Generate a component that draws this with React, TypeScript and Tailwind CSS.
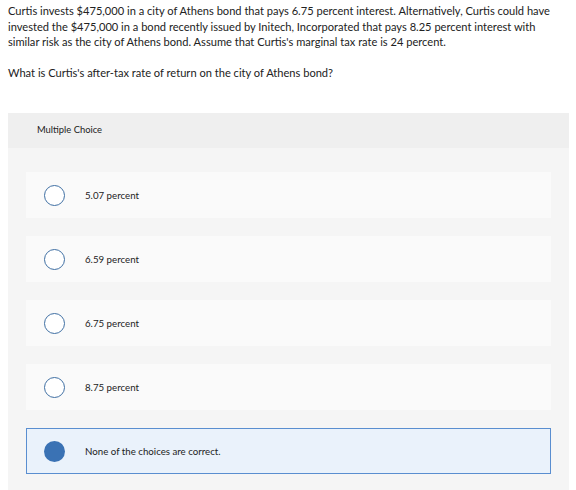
import React from "react";

const options = [
  { label: "5.07 percent", selected: false },
  { label: "6.59 percent", selected: false },
  { label: "6.75 percent", selected: false },
  { label: "8.75 percent", selected: false },
  { label: "None of the choices are correct.", selected: true },
];

export default function App() {
  return (
    <div className="w-[576px] h-[490px] bg-white overflow-hidden" style={{ fontFamily: "Lato, 'Open Sans', sans-serif" }}>
      <div className="pl-2 pt-[3px] text-[11.1px] leading-[15.5px] text-[#222] whitespace-nowrap">
        <p>
          Curtis invests $475,000 in a city of Athens bond that pays 6.75 percent interest. Alternatively, Curtis could have
          <br />
          invested the $475,000 in a bond recently issued by Initech, Incorporated that pays 8.25 percent interest with
          <br />
          similar risk as the city of Athens bond. Assume that Curtis's marginal tax rate is 24 percent.
        </p>
        <p className="mt-[15px]">What is Curtis's after-tax rate of return on the city of Athens bond?</p>
      </div>
      <div className="ml-2 mr-[7px] mt-[33px] bg-[#f5f5f5] h-[400px]">
        <div className="h-[35px] bg-[#efefef] flex items-center pl-[29px] text-[9.4px] text-[#222]">Multiple Choice</div>
        <div className="px-[18px] pt-[24px] flex flex-col gap-[18px]">
          {options.map((o) => (
            <div
              key={o.label}
              className={
                o.selected
                  ? "h-[46px] flex items-center bg-[#eaf2fb] border-[1.5px] border-[#5a8ed0] pl-[17px]"
                  : "h-[46px] flex items-center bg-[#fafafa] pl-[18px]"
              }
            >
              {o.selected ? (
                <div className="w-[21px] h-[21px] rounded-full bg-[#3a72b4]" />
              ) : (
                <div className="w-[21px] h-[21px] rounded-full border-[1.5px] border-[#3f6fa3] bg-white" />
              )}
              <span className="ml-[20px] text-[9.7px] text-[#222]">{o.label}</span>
            </div>
          ))}
        </div>
      </div>
    </div>
  );
}
